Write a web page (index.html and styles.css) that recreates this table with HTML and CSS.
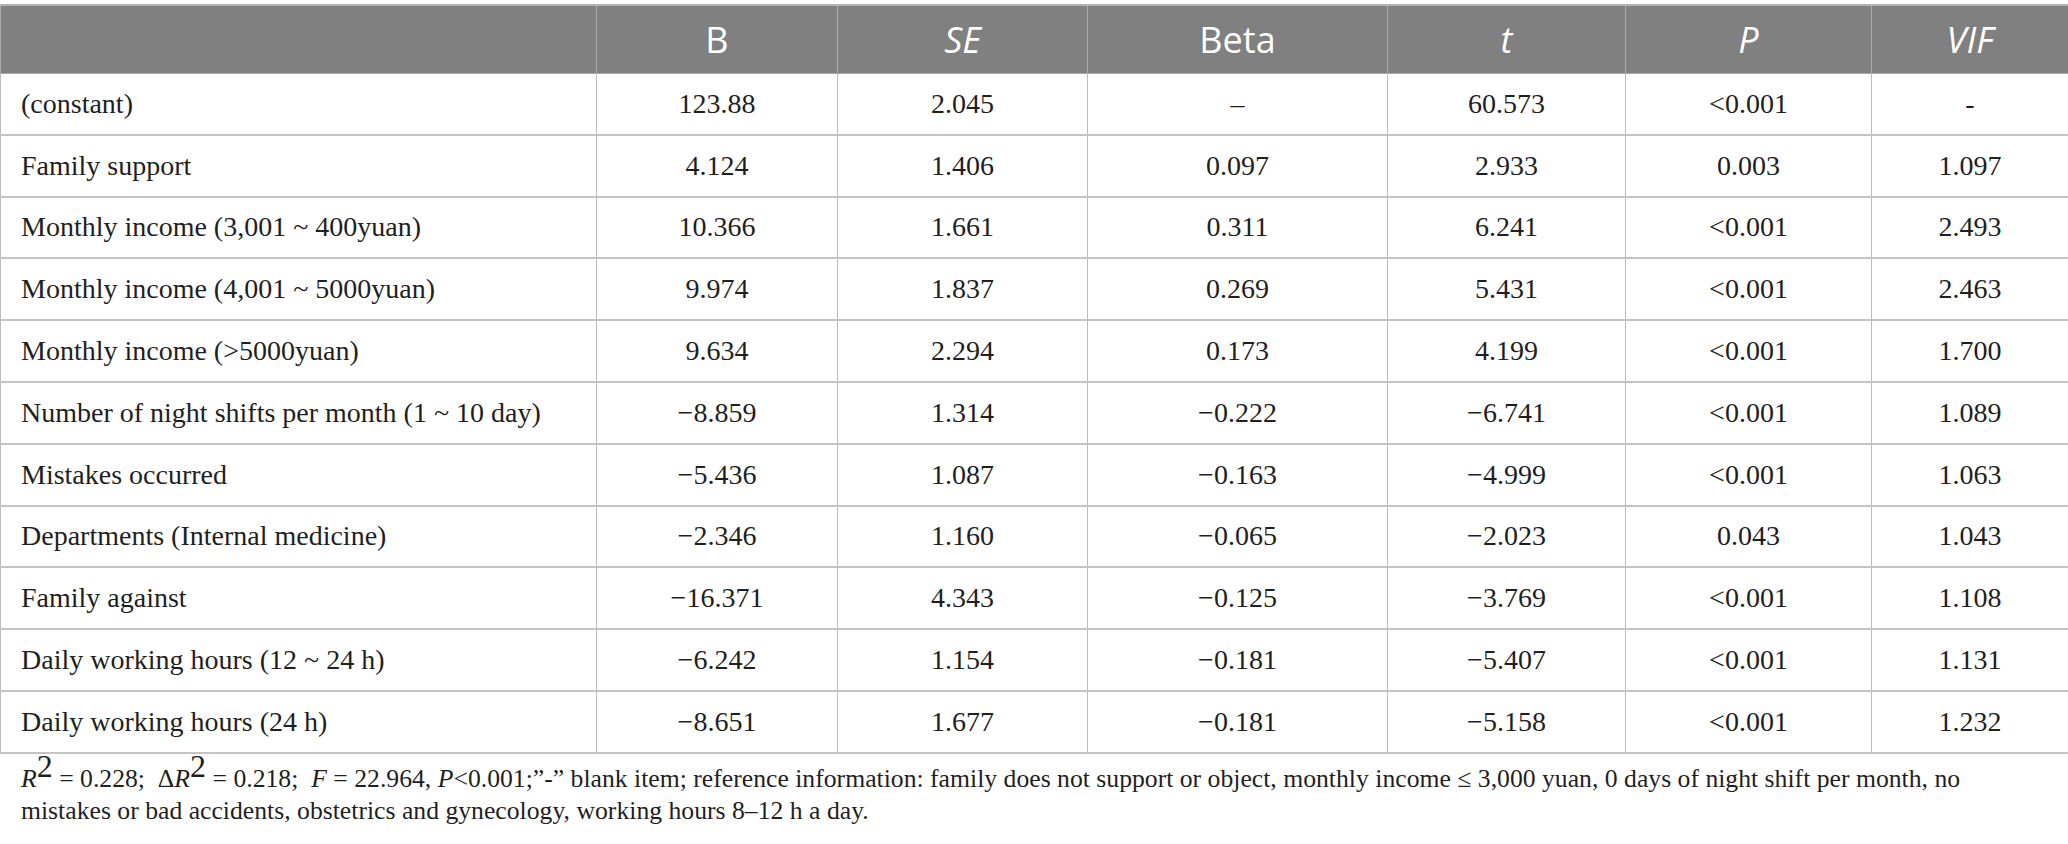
FILE: index.html
```html
<!DOCTYPE html>
<html lang="en">
<head>
  <meta charset="UTF-8">
  <meta name="viewport" content="width=device-width, initial-scale=1.0">
  <title>Regression Table</title>
  <link rel="stylesheet" href="styles.css">
</head>
<body>
  <div class="table-wrap">
    <table class="data-table">
      <colgroup>
        <col class="col-label">
        <col class="col-b">
        <col class="col-se">
        <col class="col-beta">
        <col class="col-t">
        <col class="col-p">
        <col class="col-vif">
      </colgroup>
      <thead>
        <tr>
          <th></th>
          <th>B</th>
          <th><i>SE</i></th>
          <th>Beta</th>
          <th><i>t</i></th>
          <th><i>P</i></th>
          <th><i>VIF</i></th>
        </tr>
      </thead>
      <tbody>
        <tr><td>(constant)</td><td>123.88</td><td>2.045</td><td>–</td><td>60.573</td><td>&lt;0.001</td><td>-</td></tr>
        <tr><td>Family support</td><td>4.124</td><td>1.406</td><td>0.097</td><td>2.933</td><td>0.003</td><td>1.097</td></tr>
        <tr><td>Monthly income (3,001 ~ 400yuan)</td><td>10.366</td><td>1.661</td><td>0.311</td><td>6.241</td><td>&lt;0.001</td><td>2.493</td></tr>
        <tr><td>Monthly income (4,001 ~ 5000yuan)</td><td>9.974</td><td>1.837</td><td>0.269</td><td>5.431</td><td>&lt;0.001</td><td>2.463</td></tr>
        <tr><td>Monthly income (&gt;5000yuan)</td><td>9.634</td><td>2.294</td><td>0.173</td><td>4.199</td><td>&lt;0.001</td><td>1.700</td></tr>
        <tr><td>Number of night shifts per month (1 ~ 10 day)</td><td>−8.859</td><td>1.314</td><td>−0.222</td><td>−6.741</td><td>&lt;0.001</td><td>1.089</td></tr>
        <tr><td>Mistakes occurred</td><td>−5.436</td><td>1.087</td><td>−0.163</td><td>−4.999</td><td>&lt;0.001</td><td>1.063</td></tr>
        <tr><td>Departments (Internal medicine)</td><td>−2.346</td><td>1.160</td><td>−0.065</td><td>−2.023</td><td>0.043</td><td>1.043</td></tr>
        <tr><td>Family against</td><td>−16.371</td><td>4.343</td><td>−0.125</td><td>−3.769</td><td>&lt;0.001</td><td>1.108</td></tr>
        <tr><td>Daily working hours (12 ~ 24 h)</td><td>−6.242</td><td>1.154</td><td>−0.181</td><td>−5.407</td><td>&lt;0.001</td><td>1.131</td></tr>
        <tr><td>Daily working hours (24 h)</td><td>−8.651</td><td>1.677</td><td>−0.181</td><td>−5.158</td><td>&lt;0.001</td><td>1.232</td></tr>
      </tbody>
    </table>
  </div>

  <p class="footnote">
    <i>R</i><sup>2</sup> = 0.228;&nbsp; Δ<i>R</i><sup>2</sup> = 0.218;&nbsp; <i>F</i> = 22.964, <i>P</i>&lt;0.001;”-” blank item; reference information: family does not support or object, monthly income ≤ 3,000 yuan, 0 days of night shift per month, no<br>
    mistakes or bad accidents, obstetrics and gynecology, working hours 8–12 h a day.
  </p>
</body>
</html>
```

FILE: styles.css
```css
body {
  margin: 0;
  background-color: #ffffff;
  color: #1f1f1f;
  font-family: "Liberation Serif", "Times New Roman", serif;
}

.table-wrap {
  padding-top: 4px;
}

.data-table {
  width: 2068px;
  border-collapse: collapse;
  table-layout: fixed;
  font-size: 28px;
}

.col-label { width: 596px; }
.col-b { width: 241px; }
.col-se { width: 250px; }
.col-beta { width: 300px; }
.col-t { width: 238px; }
.col-p { width: 246px; }
.col-vif { width: 197px; }

.data-table th {
  height: 67px;
  padding: 0;
  background-color: #7f807f;
  color: #ffffff;
  font-family: "Open Sans", "Noto Sans", sans-serif;
  font-weight: normal;
  font-size: 36px;
  text-align: center;
  border: 1px solid #a9aaa9;
  border-top: 2px solid #b4b4b4;
}

.data-table td {
  height: 59.8px;
  padding: 0;
  text-align: center;
  border-left: 1px solid #bdbdbd;
  border-right: 1px solid #bdbdbd;
  border-bottom: 2px solid #c4c4c4;
}

.data-table td:first-child {
  text-align: left;
  padding-left: 20px;
}

.footnote {
  margin: 9px 0 0 21px;
  font-size: 25.7px;
  line-height: 32px;
  color: #1f1f1f;
}

.footnote sup {
  font-size: 32px;
  line-height: 0;
  vertical-align: 10px;
}
```
